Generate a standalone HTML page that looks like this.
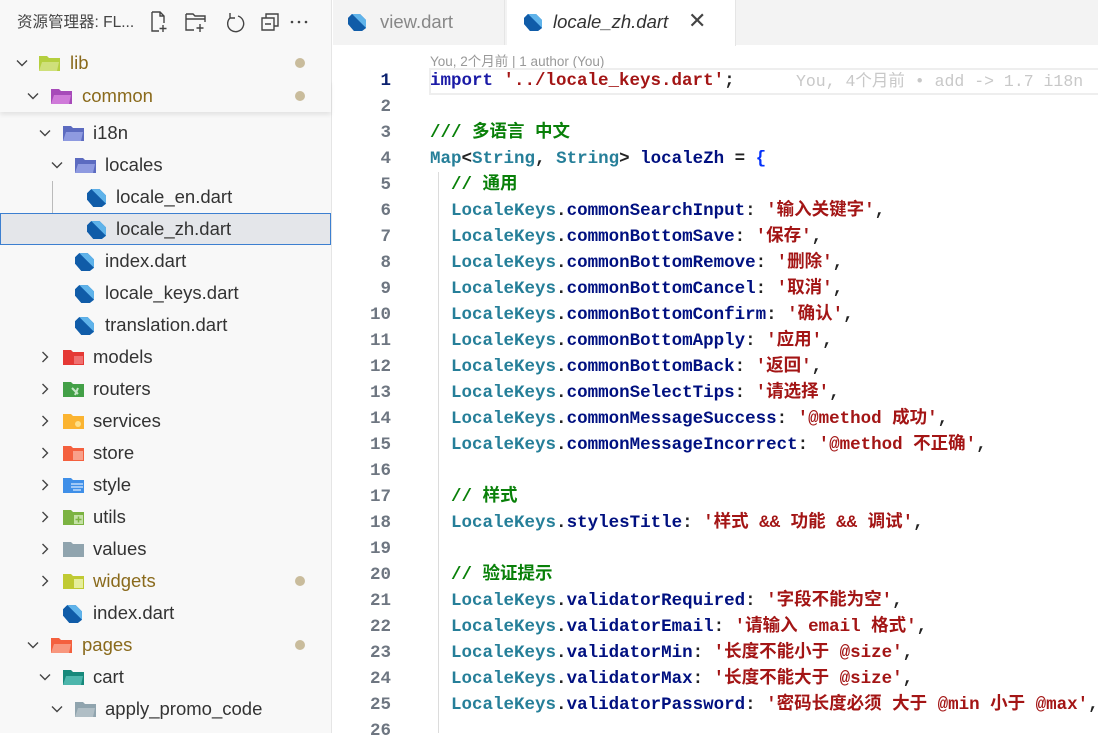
<!DOCTYPE html>
<html><head><meta charset="utf-8"><style>
*{margin:0;padding:0;box-sizing:border-box}
body{width:1098px;height:733px;overflow:hidden;background:#fff;font-family:"Liberation Sans","Noto Sans CJK SC",sans-serif;position:relative}
#side{position:absolute;left:0;top:0;width:332px;height:733px;background:#f8f8f8;border-right:1px solid #e5e5e5}
.r{position:absolute;left:0;width:331px;height:32px;font-size:18.5px;color:#333;line-height:32px;white-space:nowrap}
.r .t{position:absolute;top:0}
.chev{position:absolute;top:9px;width:14px;height:14px}
.ic{position:absolute;top:6px}
.dot{position:absolute;left:295px;top:11px;width:10px;height:10px;border-radius:50%;background:#c9bc9c}
.ol{color:#8a6a1c}
#tabs{position:absolute;left:333px;top:0;width:765px;height:45px;background:#f3f3f3}
.code{position:absolute;left:333px;top:45px;right:0;bottom:0}
.ln{position:absolute;width:60px;left:331px;text-align:right;font:bold 17.5px "Liberation Mono",monospace;color:#6e7681;height:26px;line-height:26px}
.cl{position:absolute;left:430px;font:bold 17.5px "Liberation Mono","Noto Sans CJK SC",monospace;height:26px;line-height:26px;white-space:pre;color:#222}
.k{color:#1a1aa6}.s{color:#a31515}.c{color:#098009}.ty{color:#267f99}.p{color:#001080}.b{color:#0431fa}
</style></head><body>
<svg width="0" height="0" style="position:absolute"><defs>
<symbol id="dart" viewBox="0 0 20 20"><path d="M5 2 L13 2 L19 8 L19 16 L15 19 L7 19 L1 12 L1 6 Z" fill="#1a6fc0"/><path d="M5 2 L13 2 L19 8 L19 16 L8 5 Z" fill="#5fb3ea"/><path d="M1 6 L5 2 L8 5 L19 16 L15 19 L7 19 L1 12Z" fill="#0f5aa5" opacity=".9"/></symbol>
<symbol id="chd" viewBox="0 0 14 14"><path d="M2 4.5 L7 9.5 L12 4.5" fill="none" stroke="#444" stroke-width="1.4"/></symbol>
<symbol id="chr" viewBox="0 0 14 14"><path d="M4.5 2 L9.5 7 L4.5 12" fill="none" stroke="#444" stroke-width="1.4"/></symbol>
</defs></svg>

<div id="side">
<div style="position:absolute;left:17px;top:10px;font-size:15.5px;color:#444">资源管理器: FL...</div>
<svg style="position:absolute;left:150px;top:10px" width="175" height="24" fill="none" stroke="#444" stroke-width="1.4">
<path d="M2 2 H10 L14 6 V13 M2 2 V21 H9 M10 2 V6 H14 M13 15 V22 M9.5 18.5 H16.5"/>
<path d="M36 4 H43 L45 6 H55 V12 M36 4 V20 H44 M36 9 H55 M50 14 V22 M46.5 18 H53.5"/>
<path d="M88 6 A8 8 0 1 1 80 8 M80 3 V8 H85"/>
<path d="M112 8 H124 V20 H112 Z M116 8 V4 H128 V16 H124 M115 14 H121"/>
<circle cx="142" cy="12" r="1.3" fill="#444" stroke="none"/><circle cx="149" cy="12" r="1.3" fill="#444" stroke="none"/><circle cx="156" cy="12" r="1.3" fill="#444" stroke="none"/>
</svg>

<div class="r" style="top:47px"><svg class="chev" style="left:15px"><use href="#chd"/></svg>
<svg class="ic" style="left:38px" width="24" height="20"><path d="M1 3H9L11 5H22V18H1Z" fill="#b5cf3f"/><path d="M4 9H21L19 18H1Z" fill="#cfe07a"/></svg><span class="t ol" style="left:70px">lib</span><i class="dot"></i></div>
<div class="r" style="top:80px;box-shadow:0 3px 4px rgba(0,0,0,.08);background:#f8f8f8;z-index:2"><svg class="chev" style="left:26px"><use href="#chd"/></svg>
<svg class="ic" style="left:50px" width="24" height="20"><path d="M1 3H9L11 5H22V18H1Z" fill="#a74ab9"/><path d="M4 9H21L19 18H1Z" fill="#cf7ad9"/></svg><span class="t ol" style="left:82px">common</span><i class="dot"></i></div>
<div class="r" style="top:117px"><svg class="chev" style="left:38px"><use href="#chd"/></svg>
<svg class="ic" style="left:62px" width="24" height="20"><path d="M1 3H9L11 5H22V18H1Z" fill="#5c6bc0"/><path d="M4 9H21L19 18H1Z" fill="#8e9ae0"/></svg><span class="t" style="left:93px">i18n</span></div>
<div class="r" style="top:149px"><svg class="chev" style="left:50px"><use href="#chd"/></svg>
<svg class="ic" style="left:74px" width="24" height="20"><path d="M1 3H9L11 5H22V18H1Z" fill="#5c6bc0"/><path d="M4 9H21L19 18H1Z" fill="#8e9ae0"/></svg><span class="t" style="left:105px">locales</span></div>
<div style="position:absolute;left:52px;top:181px;width:1px;height:64px;background:#bbb"></div>
<div class="r" style="top:181px"><svg class="ic" style="left:86px" width="21" height="21"><use href="#dart"/></svg><span class="t" style="left:116px">locale_en.dart</span></div>
<div class="r" style="top:213px;background:#e4e6ea;border:1px solid #3c7fd0;height:32px;line-height:30px"><svg class="ic" style="left:85px;top:5px" width="21" height="21"><use href="#dart"/></svg><span class="t" style="left:115px">locale_zh.dart</span></div>
<div class="r" style="top:245px"><svg class="ic" style="left:74px" width="21" height="21"><use href="#dart"/></svg><span class="t" style="left:105px">index.dart</span></div>
<div class="r" style="top:277px"><svg class="ic" style="left:74px" width="21" height="21"><use href="#dart"/></svg><span class="t" style="left:105px">locale_keys.dart</span></div>
<div class="r" style="top:309px"><svg class="ic" style="left:74px" width="21" height="21"><use href="#dart"/></svg><span class="t" style="left:105px">translation.dart</span></div>

<div class="r" style="top:341px"><svg class="chev" style="left:38px"><use href="#chr"/></svg><svg class="ic" style="left:62px" width="24" height="20"><path d="M1 3H9L11 5H22V18H1Z" fill="#e53935"/><rect x="12" y="9" width="9" height="8" fill="#f07070"/></svg><span class="t" style="left:93px">models</span></div>
<div class="r" style="top:373px"><svg class="chev" style="left:38px"><use href="#chr"/></svg><svg class="ic" style="left:62px" width="24" height="20"><path d="M1 3H9L11 5H22V18H1Z" fill="#43a047"/><path d="M10 9L16 15M16 9L13 16" stroke="#c8e6c9" stroke-width="2"/></svg><span class="t" style="left:93px">routers</span></div>
<div class="r" style="top:405px"><svg class="chev" style="left:38px"><use href="#chr"/></svg><svg class="ic" style="left:62px" width="24" height="20"><path d="M1 3H9L11 5H22V18H1Z" fill="#fbb431"/><circle cx="16" cy="13" r="3" fill="#fde08a"/></svg><span class="t" style="left:93px">services</span></div>
<div class="r" style="top:437px"><svg class="chev" style="left:38px"><use href="#chr"/></svg><svg class="ic" style="left:62px" width="24" height="20"><path d="M1 3H9L11 5H22V18H1Z" fill="#f4603e"/><rect x="11" y="8" width="10" height="9" fill="#f9a08a"/></svg><span class="t" style="left:93px">store</span></div>
<div class="r" style="top:469px"><svg class="chev" style="left:38px"><use href="#chr"/></svg><svg class="ic" style="left:62px" width="24" height="20"><path d="M1 3H9L11 5H22V18H1Z" fill="#3f8fe8"/><path d="M9 9H21M9 12H21M11 15H19" stroke="#bfdcfa" stroke-width="1.5"/></svg><span class="t" style="left:93px">style</span></div>
<div class="r" style="top:501px"><svg class="chev" style="left:38px"><use href="#chr"/></svg><svg class="ic" style="left:62px" width="24" height="20"><path d="M1 3H9L11 5H22V18H1Z" fill="#7cb342"/><rect x="12" y="8" width="9" height="9" fill="#c5e1a5"/><path d="M16.5 9.5V15.5M13.5 12.5H19.5" stroke="#7cb342" stroke-width="1.5"/></svg><span class="t" style="left:93px">utils</span></div>
<div class="r" style="top:533px"><svg class="chev" style="left:38px"><use href="#chr"/></svg><svg class="ic" style="left:62px" width="24" height="20"><path d="M1 3H9L11 5H22V18H1Z" fill="#90a4ae"/></svg><span class="t" style="left:93px">values</span></div>
<div class="r" style="top:565px"><svg class="chev" style="left:38px"><use href="#chr"/></svg><svg class="ic" style="left:62px" width="24" height="20"><path d="M1 3H9L11 5H22V18H1Z" fill="#c0ca33"/><rect x="12" y="8" width="9" height="9" fill="#e6ee9c"/></svg><span class="t ol" style="left:93px">widgets</span><i class="dot"></i></div>
<div class="r" style="top:597px"><svg class="ic" style="left:62px" width="21" height="21"><use href="#dart"/></svg><span class="t" style="left:93px">index.dart</span></div>
<div class="r" style="top:629px"><svg class="chev" style="left:26px"><use href="#chd"/></svg><svg class="ic" style="left:50px" width="24" height="20"><path d="M1 3H9L11 5H22V18H1Z" fill="#f4603e"/><path d="M4 9H21L19 18H1Z" fill="#f8977e"/></svg><span class="t ol" style="left:82px">pages</span><i class="dot"></i></div>
<div class="r" style="top:661px"><svg class="chev" style="left:38px"><use href="#chd"/></svg><svg class="ic" style="left:62px" width="24" height="20"><path d="M1 3H9L11 5H22V18H1Z" fill="#17897b"/><path d="M4 9H21L19 18H1Z" fill="#4db6ac"/></svg><span class="t" style="left:93px">cart</span></div>
<div class="r" style="top:693px"><svg class="chev" style="left:50px"><use href="#chd"/></svg><svg class="ic" style="left:74px" width="24" height="20"><path d="M1 3H9L11 5H22V18H1Z" fill="#90a4ae"/><path d="M4 9H21L19 18H1Z" fill="#b0bec5"/></svg><span class="t" style="left:105px">apply_promo_code</span></div>
</div>

<div id="tabs">
<div style="position:absolute;left:0;top:0;width:172px;height:45px;border-right:1px solid #e5e5e5"></div>
<svg style="position:absolute;left:14px;top:12px" width="20" height="20"><use href="#dart"/></svg>
<span style="position:absolute;left:47px;top:11px;font-size:18.5px;color:#888">view.dart</span>
<div style="position:absolute;left:174px;top:0;width:229px;height:46px;background:#fff;border-right:1px solid #e5e5e5"></div>
<svg style="position:absolute;left:190px;top:12px" width="20" height="20"><use href="#dart"/></svg>
<span style="position:absolute;left:220px;top:11px;font-size:18.5px;color:#333;font-style:italic">locale_zh.dart</span>
<span style="position:absolute;left:355px;top:8px;font-size:22px;color:#444">✕</span>
</div>

<div style="position:absolute;left:430px;top:50px;font-size:13.5px;color:#999">You, 2个月前 | 1 author (You)</div>
<div style="position:absolute;left:429px;top:68px;width:669px;height:27px;border:2px solid #eeeeee;border-right:none"></div>
<div style="position:absolute;left:796px;top:68px;font:16.5px 'Liberation Mono','Noto Sans CJK SC',monospace;color:#c8c8c8;line-height:27px;white-space:pre">You, 4个月前 • add -&gt; 1.7 i18n</div>
<div style="position:absolute;left:438px;top:172px;width:1px;height:561px;background:#dcdcdc"></div>

<div class="ln" style="top:68px;color:#0b216f">1</div><div class="cl" style="top:68px"><span class="k">import</span> <span class="s">'../locale_keys.dart'</span>;</div>
<div class="ln" style="top:94px">2</div>
<div class="ln" style="top:120px">3</div><div class="cl c" style="top:120px">/// 多语言 中文</div>
<div class="ln" style="top:146px">4</div><div class="cl" style="top:146px"><span class="ty">Map</span>&lt;<span class="ty">String</span>, <span class="ty">String</span>&gt; <span class="p">localeZh</span> = <span class="b">{</span></div>
<div class="ln" style="top:172px">5</div><div class="cl c" style="top:172px">  // 通用</div>
<div class="ln" style="top:198px">6</div><div class="cl" style="top:198px">  <span class="ty">LocaleKeys</span>.<span class="p">commonSearchInput</span>: <span class="s">'输入关键字'</span>,</div>
<div class="ln" style="top:224px">7</div><div class="cl" style="top:224px">  <span class="ty">LocaleKeys</span>.<span class="p">commonBottomSave</span>: <span class="s">'保存'</span>,</div>
<div class="ln" style="top:250px">8</div><div class="cl" style="top:250px">  <span class="ty">LocaleKeys</span>.<span class="p">commonBottomRemove</span>: <span class="s">'删除'</span>,</div>
<div class="ln" style="top:276px">9</div><div class="cl" style="top:276px">  <span class="ty">LocaleKeys</span>.<span class="p">commonBottomCancel</span>: <span class="s">'取消'</span>,</div>
<div class="ln" style="top:302px">10</div><div class="cl" style="top:302px">  <span class="ty">LocaleKeys</span>.<span class="p">commonBottomConfirm</span>: <span class="s">'确认'</span>,</div>
<div class="ln" style="top:328px">11</div><div class="cl" style="top:328px">  <span class="ty">LocaleKeys</span>.<span class="p">commonBottomApply</span>: <span class="s">'应用'</span>,</div>
<div class="ln" style="top:354px">12</div><div class="cl" style="top:354px">  <span class="ty">LocaleKeys</span>.<span class="p">commonBottomBack</span>: <span class="s">'返回'</span>,</div>
<div class="ln" style="top:380px">13</div><div class="cl" style="top:380px">  <span class="ty">LocaleKeys</span>.<span class="p">commonSelectTips</span>: <span class="s">'请选择'</span>,</div>
<div class="ln" style="top:406px">14</div><div class="cl" style="top:406px">  <span class="ty">LocaleKeys</span>.<span class="p">commonMessageSuccess</span>: <span class="s">'@method 成功'</span>,</div>
<div class="ln" style="top:432px">15</div><div class="cl" style="top:432px">  <span class="ty">LocaleKeys</span>.<span class="p">commonMessageIncorrect</span>: <span class="s">'@method 不正确'</span>,</div>
<div class="ln" style="top:458px">16</div>
<div class="ln" style="top:484px">17</div><div class="cl c" style="top:484px">  // 样式</div>
<div class="ln" style="top:510px">18</div><div class="cl" style="top:510px">  <span class="ty">LocaleKeys</span>.<span class="p">stylesTitle</span>: <span class="s">'样式 &amp;&amp; 功能 &amp;&amp; 调试'</span>,</div>
<div class="ln" style="top:536px">19</div>
<div class="ln" style="top:562px">20</div><div class="cl c" style="top:562px">  // 验证提示</div>
<div class="ln" style="top:588px">21</div><div class="cl" style="top:588px">  <span class="ty">LocaleKeys</span>.<span class="p">validatorRequired</span>: <span class="s">'字段不能为空'</span>,</div>
<div class="ln" style="top:614px">22</div><div class="cl" style="top:614px">  <span class="ty">LocaleKeys</span>.<span class="p">validatorEmail</span>: <span class="s">'请输入 email 格式'</span>,</div>
<div class="ln" style="top:640px">23</div><div class="cl" style="top:640px">  <span class="ty">LocaleKeys</span>.<span class="p">validatorMin</span>: <span class="s">'长度不能小于 @size'</span>,</div>
<div class="ln" style="top:666px">24</div><div class="cl" style="top:666px">  <span class="ty">LocaleKeys</span>.<span class="p">validatorMax</span>: <span class="s">'长度不能大于 @size'</span>,</div>
<div class="ln" style="top:692px">25</div><div class="cl" style="top:692px">  <span class="ty">LocaleKeys</span>.<span class="p">validatorPassword</span>: <span class="s">'密码长度必须 大于 @min 小于 @max'</span>,</div>
<div class="ln" style="top:718px">26</div>
</body></html>
